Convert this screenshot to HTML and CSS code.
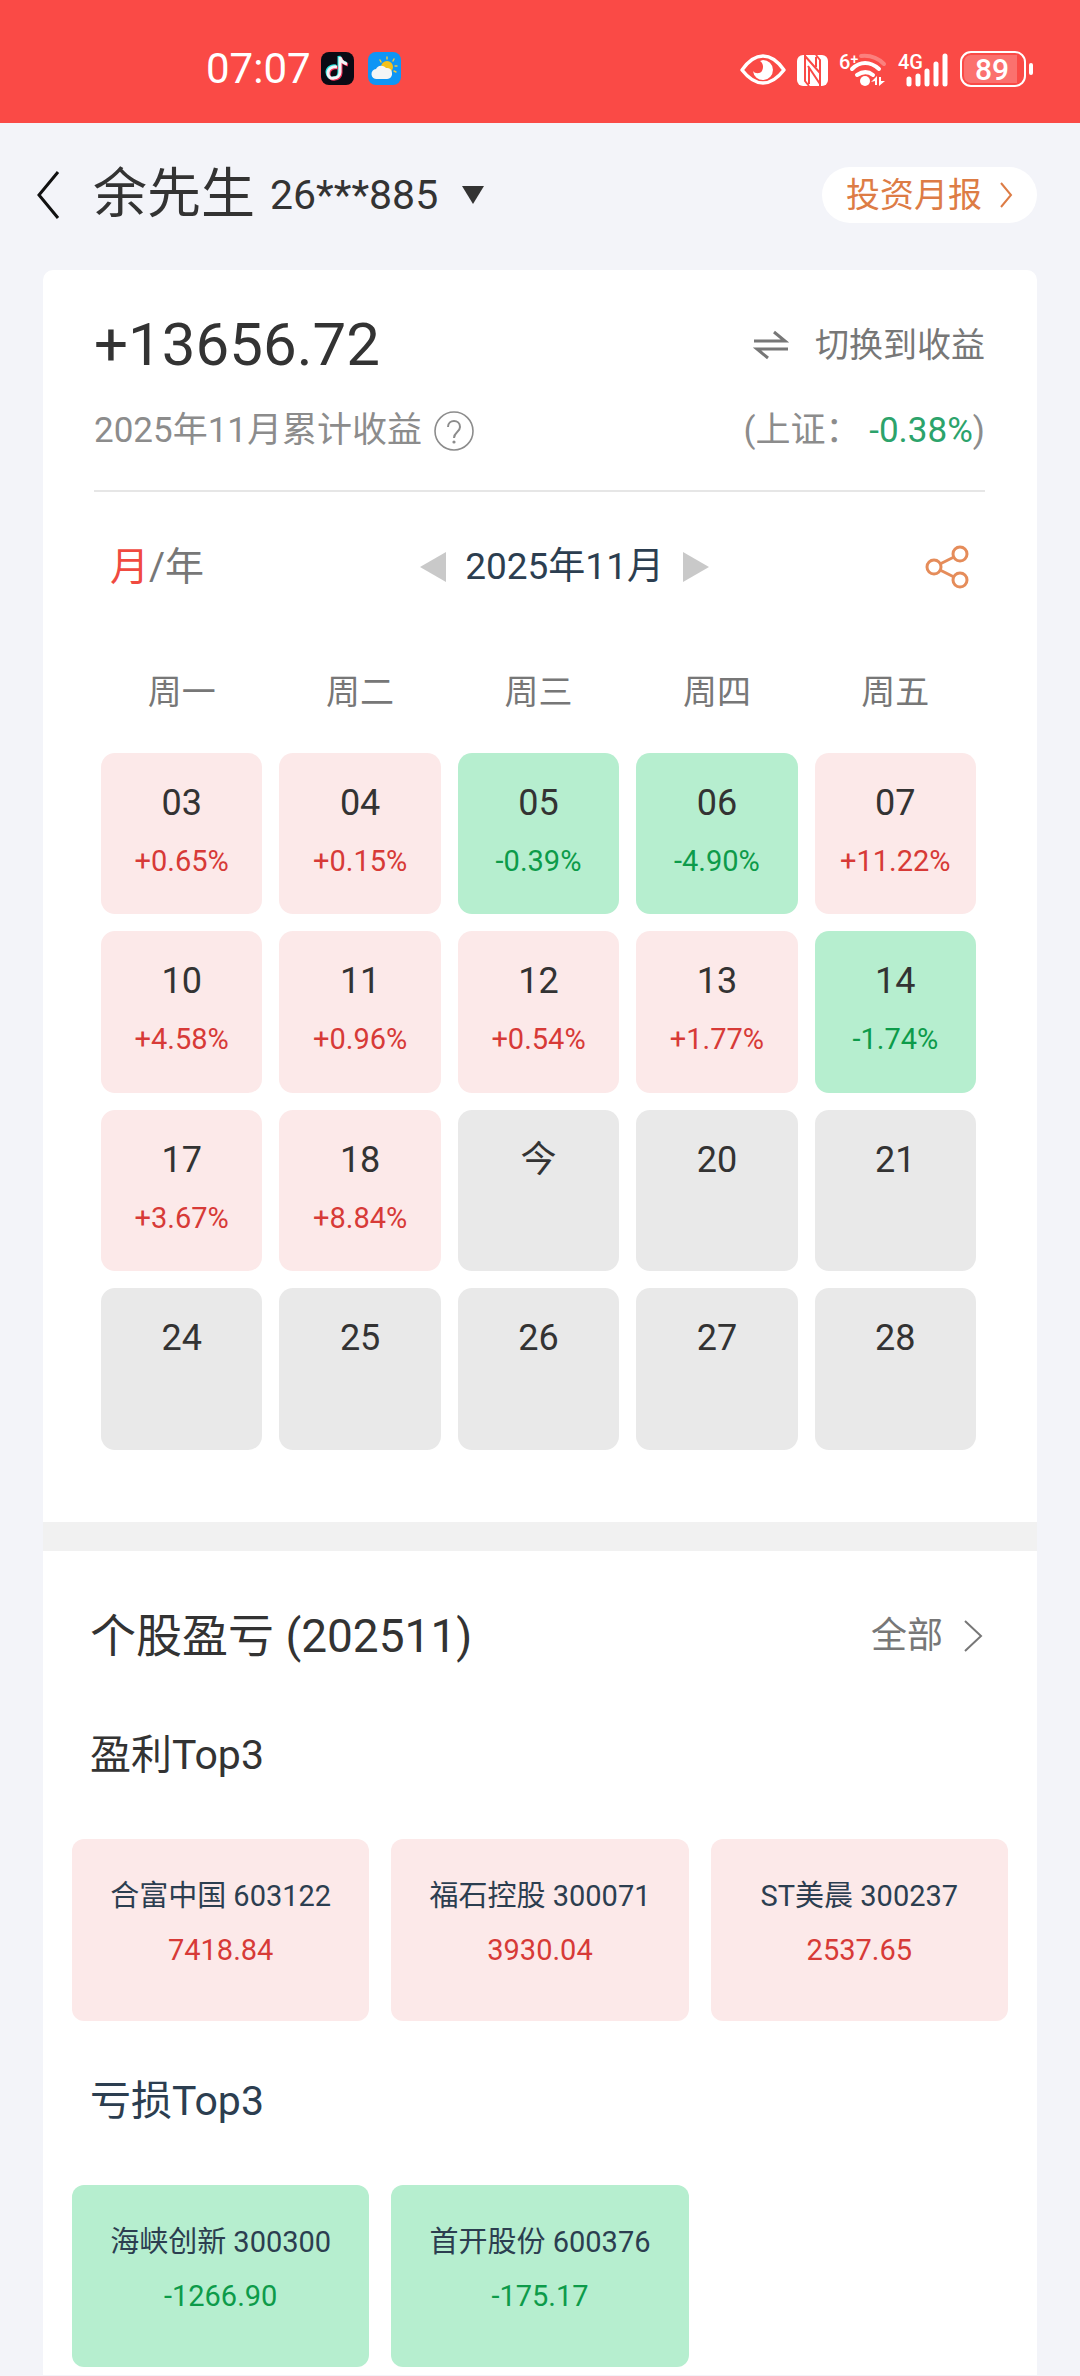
FILE: index.html
```
<!DOCTYPE html>
<html lang="zh-CN">
  <head>
    <meta charset="UTF-8" />
    <meta name="viewport" content="width=device-width, initial-scale=1.0" />
    <title>收益日历</title>
    <link rel="stylesheet" href="styles.css">
  </head>
  <body>
    <div class="statusbar">
      <div class="statusbar-left">
        <span class="statusbar-time">07:07</span>
        <svg class="app-icon" viewBox="0 0 33 33">
          <rect width="33" height="33" rx="8" fill="#0b0a14" />
          <g fill="none" stroke-width="3">
            <path d="M15 14c-5-1-9 2-9 6s3 7 6 6c3 0 6-2 6-6V4c1 4 3 6 7 7" stroke="#25e4df" />
            <path d="M17 16c-5-1-9 2-9 6s3 6 6 5c3 0 6-2 6-6V6c1 4 3 6 7 7" stroke="#f5325b" />
            <path d="M16 15c-5-1-9 2-9 6s3 6 6 5c3 0 6-2 6-6V5c1 4 3 6 7 7" stroke="#f4f4f6" />
          </g>
        </svg>
        <svg class="app-icon" viewBox="0 0 33 33">
          <rect width="33" height="33" rx="8" fill="#0e95f5" />
          <g stroke="#f5c93a" stroke-width="1.4" stroke-linecap="round">
            <path d="M19 5v2M12 8l1 2M26 7l-1 2M29 14l-2 0M28 20l-2-1" />
          </g>
          <circle cx="19" cy="15" r="6" fill="#f3c11c" />
          <path d="M9 27a5 5 0 0 1-1-10 6 6 0 0 1 10-1 5 5 0 0 1 6 5 5 5 0 0 1-5 6z" fill="#f5f5f5" />
        </svg>
      </div>
      <div class="statusbar-right">
        <svg width="46" height="36" viewBox="0 0 46 36">
          <path d="M2 19C9 9 16 5 23 5s14 4 21 14c-7 9-14 13-21 13S9 28 2 19z" fill="none" stroke="#fff" stroke-width="3.4" stroke-linejoin="round" />
          <path d="M23 9a10 10 0 1 1-10 11c2 3 7 3 9 0 2-4 1-8-2-10z" fill="#fff" />
        </svg>
        <svg width="31" height="36" viewBox="0 0 31 36">
          <rect y="4" width="31" height="31" rx="6" fill="#fff" />
          <g fill="none" stroke="#fa4a46" stroke-width="2">
            <path d="M8 4v26l4 5M23 35V9l-4-5" />
            <path d="M8 5l15 17M11 15l12 18" />
            <path d="M12 17v16M19 6v10" />
          </g>
        </svg>
        <svg width="48" height="36" viewBox="0 0 48 36">
          <text class="statusbar-tag" x="0" y="18">6<tspan font-size="14" dy="-5">+</tspan></text>
          <g fill="none" stroke="#fff" stroke-width="4" stroke-linecap="round">
            <path d="M22 5c9-1 17 2 23 8" opacity=".3" />
            <path d="M13 18c8-8 18-8 27 0" />
            <path d="M18 24c6-4 11-4 16 0" />
          </g>
          <circle cx="26" cy="30" r="5" fill="#fff" />
          <path d="M32 31l6-6v9h-2v-4zM40 26h2v4h4l-6 5z" fill="#fff" />
        </svg>
        <svg width="51" height="36" viewBox="0 0 51 36">
          <text class="statusbar-tag" x="0" y="18">4G</text>
          <path d="M11 28v5M20 25v8M29 20v13M38 13v20M47 5v28" stroke="#fff" stroke-width="5" stroke-linecap="round" />
        </svg>
        <svg width="73" height="36" viewBox="0 0 73 36">
          <rect x="1" y="1" width="64" height="34" rx="10" fill="none" stroke="#fff" stroke-width="2" />
          <path d="M11 4h46v28H11a7 7 0 0 1-7-7V11a7 7 0 0 1 7-7z" fill="#fff" opacity=".22" />
          <rect x="69" y="12" width="4" height="12" rx="2" fill="#fff" />
          <text class="statusbar-battery" x="32" y="29">89</text>
        </svg>
      </div>
    </div>

    <div class="header">
      <a class="header-back" href="#" aria-label="返回">
        <svg width="21" height="48" viewBox="0 0 21 48">
          <path d="M21 1L2 24l19 23" fill="none" stroke="#111" stroke-width="3" />
        </svg>
      </a>
      <button class="account" type="button">
        <span class="account-name">余先生</span>
        <span class="account-no">26***885</span>
        <svg width="22" height="18" viewBox="0 0 22 18"><path d="M0 0h22L11 18z" fill="#333" /></svg>
      </button>
      <a class="report-link" href="#">
        投资月报
        <svg width="13" height="26" viewBox="0 0 13 26">
          <path d="M1 1l10 12L1 25" fill="none" stroke="#dd7c45" stroke-width="2" />
        </svg>
      </a>
    </div>

    <div class="card">
      <div class="profit">
        <div class="summary">
          <div class="summary-row">
            <span class="summary-total">+13656.72</span>
            <button class="switch-button" type="button">
              <svg width="36" height="28" viewBox="0 0 36 28">
                <path d="M1 10h31L21 1M35 18H4l11 9" fill="none" stroke="#777" stroke-width="3" />
              </svg>
              切换到收益
            </button>
          </div>
          <div class="summary-row summary-sub">
            <span class="summary-label">
              2025年11月累计收益
              <svg width="40" height="40" viewBox="0 0 40 40">
                <circle cx="20" cy="20" r="19" fill="none" stroke="#8c8c8c" stroke-width="1.6" />
                <path d="M14 16c0-8 12-8 12 0 0 5-6 5-6 11" fill="none" stroke="#8c8c8c" stroke-width="2" />
                <circle cx="20" cy="31" r="1.6" fill="#8c8c8c" />
              </svg>
            </span>
            <span>(上证： <span class="index-down">-0.38%</span>)</span>
          </div>
        </div>

        <div class="toolbar">
          <div class="period">
            <button class="period-active" type="button">月</button>/<button type="button">年</button>
          </div>
          <div class="month">
            <button type="button" aria-label="上个月">
              <svg width="26" height="30" viewBox="0 0 26 30"><path d="M26 0v30L0 15z" fill="#c9c9c9" /></svg>
            </button>
            <span>2025年11月</span>
            <button type="button" aria-label="下个月">
              <svg width="26" height="30" viewBox="0 0 26 30"><path d="M0 0v30l26-15z" fill="#c9c9c9" /></svg>
            </button>
          </div>
          <button class="share" type="button" aria-label="分享">
            <svg width="44" height="44" viewBox="0 0 44 44">
              <g fill="none" stroke="#e58c5a" stroke-width="3">
                <circle cx="9" cy="22" r="7" />
                <circle cx="35" cy="9" r="7" />
                <circle cx="35" cy="35" r="7" />
                <path d="M15 19l14-7M15 25l14 7" />
              </g>
            </svg>
          </button>
        </div>

        <div class="week">
          <span>周一</span>
          <span>周二</span>
          <span>周三</span>
          <span>周四</span>
          <span>周五</span>
        </div>

        <div class="calendar">
          <button class="day up" type="button"><span>03</span><small>+0.65%</small></button>
          <button class="day up" type="button"><span>04</span><small>+0.15%</small></button>
          <button class="day down" type="button"><span>05</span><small>-0.39%</small></button>
          <button class="day down" type="button"><span>06</span><small>-4.90%</small></button>
          <button class="day up" type="button"><span>07</span><small>+11.22%</small></button>
          <button class="day up" type="button"><span>10</span><small>+4.58%</small></button>
          <button class="day up" type="button"><span>11</span><small>+0.96%</small></button>
          <button class="day up" type="button"><span>12</span><small>+0.54%</small></button>
          <button class="day up" type="button"><span>13</span><small>+1.77%</small></button>
          <button class="day down" type="button"><span>14</span><small>-1.74%</small></button>
          <button class="day up" type="button"><span>17</span><small>+3.67%</small></button>
          <button class="day up" type="button"><span>18</span><small>+8.84%</small></button>
          <button class="day" type="button"><span>今</span></button>
          <button class="day" type="button"><span>20</span></button>
          <button class="day" type="button"><span>21</span></button>
          <button class="day" type="button"><span>24</span></button>
          <button class="day" type="button"><span>25</span></button>
          <button class="day" type="button"><span>26</span></button>
          <button class="day" type="button"><span>27</span></button>
          <button class="day" type="button"><span>28</span></button>
        </div>
      </div>

      <div class="stocks">
        <div class="stocks-header">
          <h2>个股盈亏 (202511)</h2>
          <a class="stocks-all" href="#">
            全部
            <svg width="20" height="32" viewBox="0 0 20 32">
              <path d="M2 1l16 15L2 31" fill="none" stroke="#777" stroke-width="2" />
            </svg>
          </a>
        </div>

        <h3>盈利Top3</h3>
        <div class="stock-list">
          <div class="stock up"><p>合富中国 603122</p><strong>7418.84</strong></div>
          <div class="stock up"><p>福石控股 300071</p><strong>3930.04</strong></div>
          <div class="stock up"><p>ST美晨 300237</p><strong>2537.65</strong></div>
        </div>

        <h3 class="loss-title">亏损Top3</h3>
        <div class="stock-list">
          <div class="stock down"><p>海峡创新 300300</p><strong>-1266.90</strong></div>
          <div class="stock down"><p>首开股份 600376</p><strong>-175.17</strong></div>
        </div>
      </div>
    </div>
  </body>
</html>
```

FILE: styles.css
```
* {
  margin: 0;
  padding: 0;
  box-sizing: border-box;
}

body {
  background-color: #f3f4f9;
  color: #333;
  font-family: Roboto, "Noto Sans CJK SC", sans-serif;
}

button {
  border: none;
  background: none;
  color: inherit;
  font: inherit;
  cursor: pointer;
}

a {
  color: inherit;
  text-decoration: none;
}

svg {
  display: block;
  flex: none;
  overflow: visible;
}

/* status bar */
.statusbar {
  display: flex;
  align-items: center;
  justify-content: space-between;
  height: 123px;
  padding: 14px 47px 0 206px;
  background-color: #fa4a46;
  color: white;
}

.statusbar-left {
  display: flex;
  align-items: center;
  gap: 14px;
}

.statusbar-right {
  display: flex;
  align-items: center;
  gap: 11px;
}

.statusbar-time {
  margin-right: -4px;
  font-size: 42px;
  line-height: 48px;
}

.app-icon {
  width: 33px;
  height: 33px;
}

.statusbar-tag {
  fill: white;
  font-size: 20px;
  font-weight: 500;
}

.statusbar-battery {
  fill: white;
  font-size: 30px;
  font-weight: 500;
  text-anchor: middle;
}

/* header */
.header {
  display: flex;
  align-items: center;
  height: 147px;
  padding: 0 43px 3px 37px;
}

.account {
  display: flex;
  align-items: center;
  margin-left: 35px;
  line-height: 64px;
}

.account-name {
  font-size: 54px;
}

.account-no {
  margin: 0 24px 0 15px;
  font-size: 41px;
}

.report-link {
  display: flex;
  align-items: center;
  gap: 18px;
  margin-left: auto;
  padding: 0 24px;
  border-radius: 28px;
  background-color: white;
  color: #dd7c45;
  font-size: 34px;
  line-height: 56px;
}

/* card */
.card {
  margin: 0 43px;
  border-radius: 10px 10px 0 0;
  background-color: white;
}

.profit {
  padding: 39px 52px 72px 51px;
}

.summary {
  padding-bottom: 35px;
  border-bottom: 2px solid #e6e6e6;
}

.summary-row {
  display: flex;
  align-items: center;
  justify-content: space-between;
}

.summary-total {
  font-size: 60px;
  line-height: 72px;
}

.switch-button {
  display: flex;
  align-items: center;
  gap: 26px;
  color: #777;
  font-size: 34px;
  line-height: 48px;
}

.summary-sub {
  margin-top: 26px;
  color: #8c8c8c;
  font-size: 35px;
  line-height: 48px;
}

.summary-label {
  display: flex;
  align-items: center;
  gap: 12px;
}

.index-down {
  color: #2ca36b;
}

.toolbar {
  display: flex;
  align-items: center;
  justify-content: space-between;
  margin-top: 45px;
  padding: 0 16px;
  line-height: 60px;
}

.period {
  color: #777;
  font-size: 39px;
}

.period-active {
  color: #f04a40;
}

.month {
  display: flex;
  align-items: center;
  gap: 19px;
  color: #2c3e50;
  font-size: 37px;
}

.week,
.calendar {
  display: grid;
  grid-template-columns: repeat(5, 1fr);
  gap: 17px;
  padding: 0 9px 0 7px;
}

.week {
  margin-top: 71px;
  color: #777;
  font-size: 34px;
  line-height: 48px;
  text-align: center;
}

.calendar {
  margin-top: 37px;
}

.day {
  display: flex;
  flex-direction: column;
  align-items: center;
  aspect-ratio: 1;
  padding-top: 21px;
  border-radius: 14px;
  background-color: #e9e9e9;
  line-height: 58px;
}

.day span {
  font-size: 36px;
}

.day small {
  font-size: 29px;
}

.up {
  background-color: #fce9e9;
}

.down {
  background-color: #b6eecf;
}

.up small,
.up strong {
  color: #d73a37;
}

.down small,
.down strong {
  color: #0d9b4a;
}

/* stocks */
.stocks {
  padding: 53px 29px 8px;
  border-top: 29px solid #f1f1f1;
}

.stocks-header {
  display: flex;
  align-items: center;
  justify-content: space-between;
  margin-bottom: 59px;
  padding: 0 25px 0 18px;
  line-height: 64px;
}

.stocks h2 {
  font-size: 46px;
  font-weight: 400;
}

.stocks-all {
  display: flex;
  align-items: center;
  gap: 20px;
  color: #777;
  font-size: 36px;
}

.stocks h3 {
  margin-bottom: 56px;
  padding-left: 18px;
  font-size: 41px;
  font-weight: 400;
  line-height: 56px;
}

.stocks .loss-title {
  margin-top: 52px;
  color: #2c3e50;
}

.stock-list {
  display: grid;
  grid-template-columns: repeat(3, 1fr);
  gap: 22px;
}

.stock {
  padding: 30px 0 44px;
  border-radius: 12px;
  color: #2c3e50;
  font-size: 29px;
  line-height: 54px;
  text-align: center;
}

.stock strong {
  font-weight: 400;
}
```
